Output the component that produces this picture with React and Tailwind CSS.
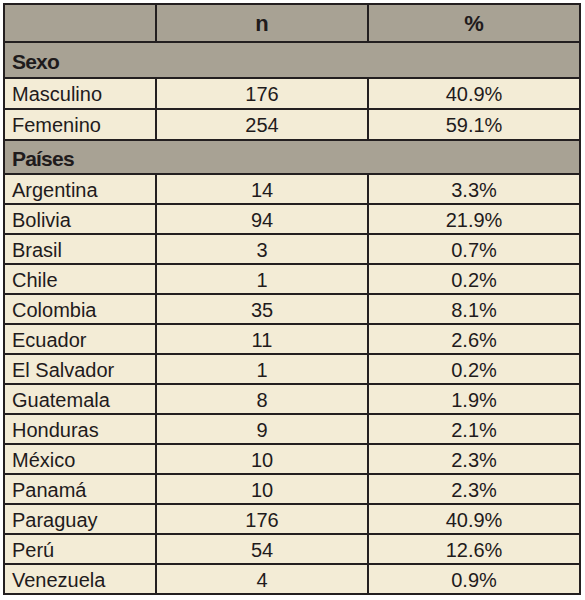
const rows = [
    { type: 'section', label: 'Sexo', h: 'h-[36px]' },
    { label: 'Masculino', n: '176', pct: '40.9%', h: 'h-[31px]' },
    { label: 'Femenino', n: '254', pct: '59.1%', h: 'h-[31px]' },
    { type: 'section', label: 'Países', h: 'h-[34px]' },
    { label: 'Argentina', n: '14', pct: '3.3%' },
    { label: 'Bolivia', n: '94', pct: '21.9%' },
    { label: 'Brasil', n: '3', pct: '0.7%' },
    { label: 'Chile', n: '1', pct: '0.2%' },
    { label: 'Colombia', n: '35', pct: '8.1%' },
    { label: 'Ecuador', n: '11', pct: '2.6%' },
    { label: 'El Salvador', n: '1', pct: '0.2%' },
    { label: 'Guatemala', n: '8', pct: '1.9%' },
    { label: 'Honduras', n: '9', pct: '2.1%' },
    { label: 'México', n: '10', pct: '2.3%' },
    { label: 'Panamá', n: '10', pct: '2.3%' },
    { label: 'Paraguay', n: '176', pct: '40.9%' },
    { label: 'Perú', n: '54', pct: '12.6%' },
    { label: 'Venezuela', n: '4', pct: '0.9%' },
];

export default function App() {
    return (
        <div className="bg-white pl-[3px] pt-[3px] w-[585px] h-[600px] text-[#1f1b1c] font-[family-name:'Liberation_Sans',Arial,sans-serif]">
            <table className="table-fixed border-collapse w-[576px] text-[20px] leading-none">
                <colgroup>
                    <col className="w-[152px]" />
                    <col className="w-[212px]" />
                    <col className="w-[212px]" />
                </colgroup>
                <thead>
                    <tr className="h-[38px] bg-[#a8a294]">
                        <th className="border-2 border-[#231f20]"></th>
                        <th className="border-2 border-[#231f20] text-center font-bold text-[22px] pt-[1px]">n</th>
                        <th className="border-2 border-[#231f20] text-center font-bold text-[22px] pt-[1px]">%</th>
                    </tr>
                </thead>
                <tbody>
                    {rows.map((r) =>
                        r.type === 'section' ? (
                            <tr key={r.label} className={`${r.h} bg-[#a8a294]`}>
                                <td colSpan={3} className="border-2 border-[#231f20] pl-[7px] pt-[2px] text-left font-bold text-[21px] tracking-[-0.8px]">
                                    {r.label}
                                </td>
                            </tr>
                        ) : (
                            <tr key={r.label} className={`${r.h || 'h-[30px]'} bg-[#f3ecd6]`}>
                                <td className="border-2 border-[#231f20] pl-[7px] pt-[1px]">{r.label}</td>
                                <td className="border-2 border-[#231f20] text-center pt-[1px]">{r.n}</td>
                                <td className="border-2 border-[#231f20] text-center pt-[1px]">{r.pct}</td>
                            </tr>
                        )
                    )}
                </tbody>
            </table>
        </div>
    );
}
